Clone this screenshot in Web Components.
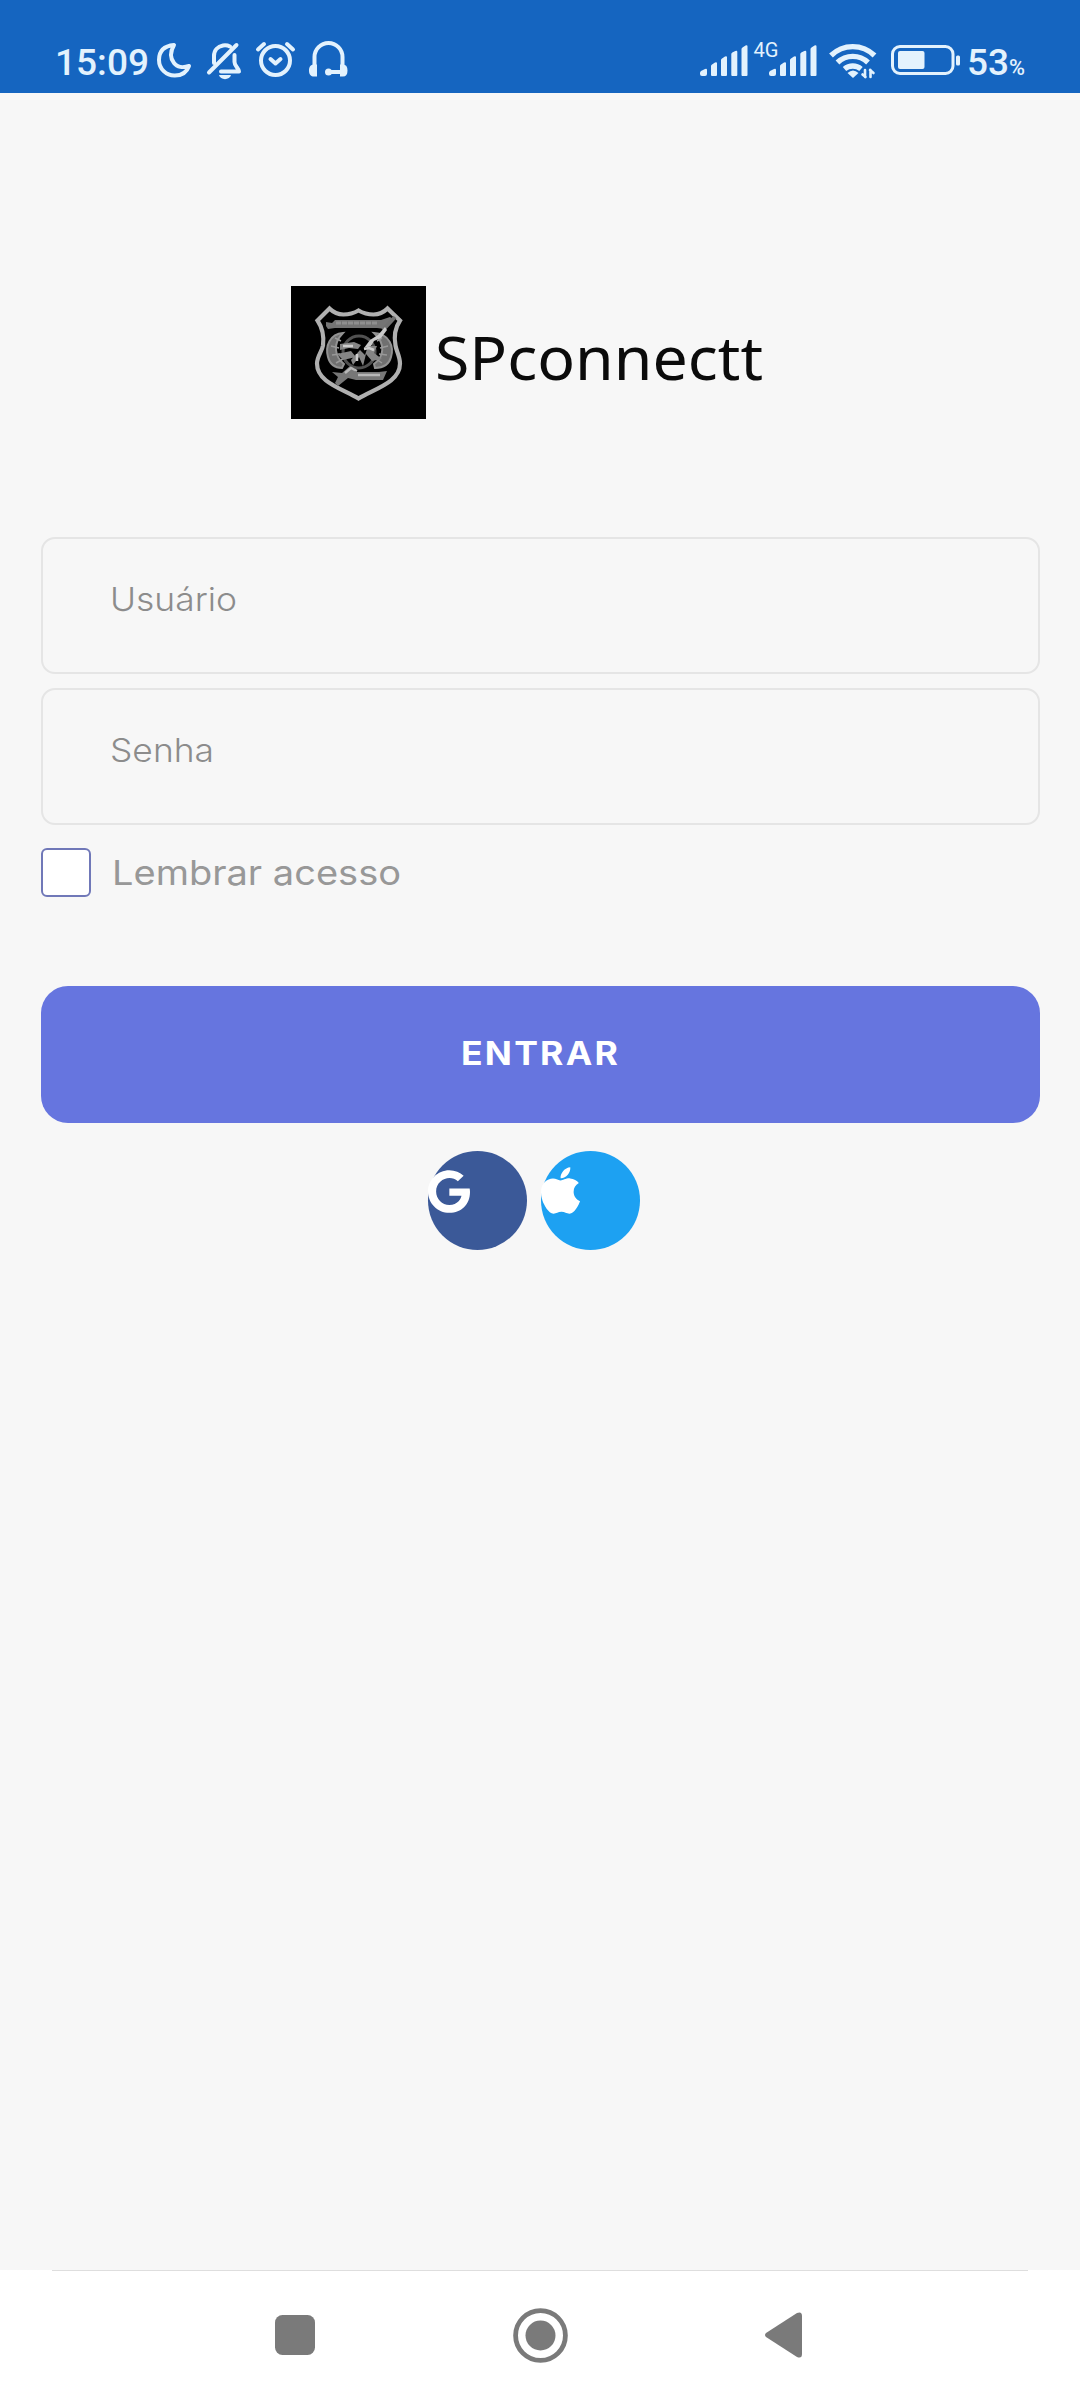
<!DOCTYPE html>
<html lang="pt-BR">
<head>
<meta charset="utf-8">
<title>SPconnectt</title>
<style>
html,
body {
  margin: 0;
  height: 100%;
}

body {
  background: #f7f7f7;
  font-family: Inter, "Liberation Sans", sans-serif;
}
</style>
</head>
<body>
<login-screen></login-screen>

<script>
/**
 * @param {string} name
 * @param {string} html
 */
const define = (name, html) => {
  const template = document.createElement('template');
  template.innerHTML = html;

  customElements.define(name, class extends HTMLElement {
    constructor() {
      super();
      const shadow = this.attachShadow({ mode: 'open' });
      shadow.appendChild(template.content.cloneNode(true));
    }
  });
};

/**
 * One line of text set to a fixed length.
 * The host is as high as the capitals, the baseline is its bottom edge.
 *
 * @extends HTMLElement
 */
class TextLine extends HTMLElement {
  constructor() {
    super();
    this.attachShadow({ mode: 'open' });
  }

  connectedCallback() {
    const length = this.getAttribute('length');
    const height = this.getAttribute('height');
    this.shadowRoot.innerHTML = `
      <style>
      :host {
        display: block;
        flex: none;
      }

      svg {
        display: block;
        overflow: visible;
        fill: currentColor;
      }
      </style>
      <svg width="${length}" height="${height}">
        <text y="${height}" textLength="${length}" lengthAdjust="spacingAndGlyphs"></text>
      </svg>
    `;
    this.shadowRoot.querySelector('text').textContent = this.getAttribute('text');
  }
}

customElements.define('text-line', TextLine);

define('status-bar', `
<style>
:host {
  display: block;
  box-sizing: border-box;
  height: 93px;
  background: #1565c0;
  color: #e3f2fd;
  font: 500 37px Roboto, sans-serif;
}

.bar {
  display: flex;
  justify-content: space-between;
  padding: 40px 55px 0 55px;
}

.group {
  display: flex;
}

text-line {
  margin-top: 9px;
}

svg {
  display: block;
  overflow: visible;
  fill: none;
  stroke: currentColor;
  stroke-width: 4;
  stroke-linecap: round;
  stroke-linejoin: round;
}

.icons {
  margin-left: -1px;
}

.solid {
  fill: currentColor;
  stroke: none;
}

.net {
  font-size: 20px;
  font-weight: 400;
}

.percent {
  font-size: 22px;
  margin-top: 20px;
}
</style>
<div class="bar">
  <div class="group">
    <text-line text="15:09" length="94" height="26"></text-line>
    <svg class="icons" width="205" height="40">
      <!-- moon -->
      <path d="M26 5C15 6 11 12 11 20a15.500 15.500 0 0 0 16 15.500c7 0 12-4 14-9.500-6 2-12 1-15-3-4-5-4-11 0-18z"/>
      <!-- muted bell -->
      <path d="M88.500 5 61 32.500M66 23v-7c0-6 4-9.500 9-10.500 3-.5 5 0 7 1M86.500 15v7c0 4 4 6 4.500 9.500H73"/>
      <path class="solid" d="M71 35h12c-1 5.500-11 5.500-12 0z"/>
      <!-- alarm -->
      <circle cx="127.500" cy="20.500" r="14.500"/>
      <path d="M110 9.500l6-5.500M145 9.500l-6-5.500M122.500 19l5 4.500 5-4.500"/>
      <!-- headphones -->
      <path d="M166.500 28V17a14 14 0 0 1 28 0v11M182 32h12"/>
      <path class="solid" d="M166 24.500h3v12h-3c-3 0-5-2-5-6s2-6 5-6zM192 24.500h3c3 0 4.500 2 4.500 6s-1.500 6-4.500 6h-3z"/>
      <circle class="solid" cx="180.500" cy="32" r="3.500"/>
    </svg>
  </div>
  <div class="group">
    <svg width="267" height="40">
      <g class="solid">
        <path id="signal" d="M0 36v-3q0-1 1-2l4-2q2-1 2 1v4q0 2-2 2H2q-2 0-2-2zM11 35V26q0-1 1-1.500l3-2q2-1 2 1V35q0 1-1 1h-4q-1 0-1-1zM21 35V20q0-1 1-1.500l3-2q2-1 2 1V35q0 1-1 1h-4q-1 0-1-1zM31.300 35V14q0-1 1-1.500l3-1.500q2-1 2 1V35q0 1-1 1h-4q-1 0-1-1zM41.500 35V9q0-1 1-1.500l3-2q2-1 2 1V35q0 1-1 1h-4q-1 0-1-1z"/>
        <use href="#signal" x="69"/>
        <text class="net" x="53.500" y="17" textLength="25" lengthAdjust="spacingAndGlyphs">4G</text>
      </g>
      <!-- wifi -->
      <path d="M131 15.500a31 31 0 0 1 43.500 0M137.500 22.500a22 22 0 0 1 30.500 0M144.500 29a13 13 0 0 1 16.500 0" style="stroke-linecap:butt;stroke-width:5.400"/>
      <path class="solid" d="M147.500 33q5.500-5 11 0l-5.500 5z"/>
      <path d="M165 30v7M165.500 37l-3-2.500M170.500 37v-7M170 30l3.500 3" style="stroke-width:2.600"/>
      <!-- battery -->
      <rect x="192.500" y="6.500" width="60.500" height="27" rx="7.500" style="stroke-width:3"/>
      <rect class="solid" x="198" y="11" width="26.500" height="18" rx="2"/>
      <rect class="solid" x="256" y="15.500" width="4" height="10" rx="1.500"/>
    </svg>
    <text-line text="53" length="42" height="26"></text-line>
    <text-line class="percent" text="%" length="16" height="15"></text-line>
  </div>
</div>
`);

define('brand-logo', `
<style>
:host {
  display: flex;
  color: #0b0b0b;
  font: 400 60px "Noto Sans", "Open Sans", sans-serif;
}

.badge {
  display: block;
  background: #000;
}

text-line {
  margin: 49px 0 0 9px;
}
</style>
<svg class="badge" width="135" height="133" viewBox="0 0 135 133" fill="none">
  <path d="M38.500 22.500q6 6 14 6 8 0 15-4 7 4 15 4 8 0 14-6L109 34.500c-6 9-6 17-4.500 25 1 6 4.500 11 4.500 18 0 19-25 25-41.500 35C51 102.500 26 96.500 26 77.500c0-7 5-12 6-18 1-8 0-17-5.500-25z" stroke="#b0b0b0" stroke-width="4.200"/>
  <path d="M35 36l6 1 3-3h46l9-3 3 2-8 10-8-1H44l-7 1-2-3z" fill="#747474"/>
  <path d="M45 37h42" stroke="#8f8f8f" stroke-width="3" stroke-dasharray="5 1"/>
  <path d="M52 47C39 48 34 60 37 71c2 8 7 11 14 11l2-4c-9-7-12-20-1-31zM83 47c16 1 20 14 17 24-2 8-8 11-16 11l-1-4c10-7 12-20 0-31z" fill="#707070" stroke="#929292" stroke-width="2"/>
  <path d="M44 52l6 3M40 60l8 2M41 69l8-1M45 77l7-4M91 52l-5 3M97 60l-8 2M96 69l-8-1M91 77l-6-4" stroke="#999" stroke-width="1.500"/>
  <circle cx="68" cy="66" r="16" stroke="#505050" stroke-width="3"/>
  <path d="M49 58l14-2 7 3-3 4-9-1-9 2zM46 68l14-3 5 6-13 3zM60 74l9-10 5 5 3-9h9l-3 7 8 6-10 2-6-7-3 12-4-9-6 8z" fill="#858585"/>
  <path d="M52 60h10M73 63l5-1 5 2M66 68v7" stroke="#cdcdcd" stroke-width="2.500"/>
  <path d="M104 31 92 44M62 82 46 98" stroke="#707070" stroke-width="4"/>
  <path d="M73 62l6-8 8-5 7-8 2 3-6 8-7 3-3 5z" fill="#c9c9c9"/>
  <path d="M41 86l10 1 8-7 6 6h23l8-1-4 9H65l-8-2-10 8-3-3 3-6z" fill="#777"/>
  <path d="M54 87l6-5 6 3M67 89h22" stroke="#b8b8b8" stroke-width="2.500"/>
</svg>
<text-line text="SPconnectt" length="328" height="45"></text-line>
`);

define('text-field', `
<style>
:host {
  display: block;
  box-sizing: border-box;
  height: 137px;
  border: 2px solid #e5e5e5;
  border-radius: 14px;
  padding: 48px 0 0 67px;
  color: #8c8c8c;
  font-size: 33px;
  font-weight: 300;
}
</style>
<slot></slot>
`);

define('check-box', `
<style>
:host {
  display: flex;
  color: #989898;
  font-size: 34px;
}

.box {
  box-sizing: border-box;
  width: 50px;
  height: 49px;
  border: 2px solid #7078b8;
  border-radius: 6px;
  background: #fff;
  margin-right: 21px;
}

::slotted(*) {
  margin-top: 12px;
}
</style>
<div class="box"></div>
<slot></slot>
`);

define('primary-button', `
<style>
:host {
  display: flex;
  justify-content: center;
  box-sizing: border-box;
  height: 137px;
  padding-top: 56px;
  border-radius: 27px;
  background: #6675df;
  color: #fff;
  font-size: 32px;
  font-weight: 700;
  letter-spacing: 2px;
}
</style>
<slot></slot>
`);

define('social-button', `
<style>
:host {
  display: block;
  box-sizing: border-box;
  width: 99px;
  height: 99px;
  border-radius: 50%;
}
</style>
<slot></slot>
`);

define('nav-bar', `
<style>
:host {
  display: block;
  height: 130px;
  background: #fff;
}

.line {
  height: 1px;
  margin: 0 52px;
  background: #dedede;
}

.keys {
  display: flex;
  align-items: center;
  justify-content: space-between;
  height: 56px;
  margin: 0 278px 0 275px;
  padding-top: 36px;
  fill: #7a7a7a;
}
</style>
<div class="line"></div>
<div class="keys">
  <svg width="40" height="40"><rect width="40" height="40" rx="7.500"/></svg>
  <svg width="55" height="55">
    <circle cx="27.500" cy="27.500" r="24.900" fill="none" stroke="#7a7a7a" stroke-width="4.800"/>
    <circle cx="27.500" cy="27.500" r="15"/>
  </svg>
  <svg width="37" height="46"><path d="M1 21 32 1q5-2 5 3v38q0 5-5 3L1 25q-2-2 0-4z"/></svg>
</div>
`);

define('login-screen', `
<style>
:host {
  display: flex;
  flex-direction: column;
  height: 2400px;
}

main {
  flex: 1;
  padding: 193px 40px 0 41px;
}

brand-logo {
  margin-left: 250px;
}

.user {
  margin-top: 118px;
}

.password {
  margin-top: 14px;
}

check-box {
  margin-top: 23px;
}

primary-button {
  margin-top: 89px;
}

.social {
  display: flex;
  gap: 14px;
  margin: 28px 0 0 387px;
}

.google {
  background: #3b5998;
}

.apple {
  background: #1da1f2;
}

.social svg {
  display: block;
  overflow: visible;
  fill: #fff;
}

.google svg {
  margin-top: 19px;
}

.apple svg {
  margin-top: 16px;
}
</style>
<status-bar></status-bar>
<main>
  <brand-logo></brand-logo>
  <text-field class="user"><text-line text="Usuário" length="127" height="24"></text-line></text-field>
  <text-field class="password"><text-line text="Senha" length="104" height="24"></text-line></text-field>
  <check-box><text-line text="Lembrar acesso" length="289" height="25"></text-line></check-box>
  <primary-button><text-line text="ENTRAR" length="159" height="23"></text-line></primary-button>
  <div class="social">
    <social-button class="google">
      <svg width="42" height="43" viewBox="0 8 488 496"><path d="M488 261.800C488 403.300 391.100 504 248 504 110.800 504 0 393.200 0 256S110.800 8 248 8c66.800 0 123 24.500 166.300 64.900l-67.500 64.900C258.500 52.600 94.300 116.600 94.300 256c0 86.500 69.100 156.600 153.700 156.600 98.200 0 135-70.400 140.800-106.900H248v-85.300h236.100c2.300 12.700 3.900 24.900 3.900 41.400z"/></svg>
    </social-button>
    <social-button class="apple">
      <svg width="39" height="47" viewBox="4 32 376 448"><path d="M318.700 268.700c-.2-36.700 16.400-64.400 50-84.800-18.800-26.900-47.200-41.700-84.700-44.600-35.500-2.800-74.300 20.700-88.500 20.700-15 0-49.400-19.700-76.400-19.700C63.300 141.200 4 184.800 4 273.500q0 39.300 14.400 81.200c12.800 36.700 59 126.700 107.200 125.200 25.200-.6 43-17.900 75.800-17.900 31.800 0 48.300 17.900 76.400 17.900 48.600-.7 90.400-82.500 102.600-119.300-65.200-30.700-61.700-90-61.700-91.900zm-56.600-164.200c27.300-32.400 24.800-61.900 24-72.500-24.100 1.400-52 16.400-67.900 34.900-17.500 19.800-27.800 44.300-25.600 71.900 26.100 2 49.900-11.400 69.500-34.300z"/></svg>
    </social-button>
  </div>
</main>
<nav-bar></nav-bar>
`);
</script>
</body>
</html>
